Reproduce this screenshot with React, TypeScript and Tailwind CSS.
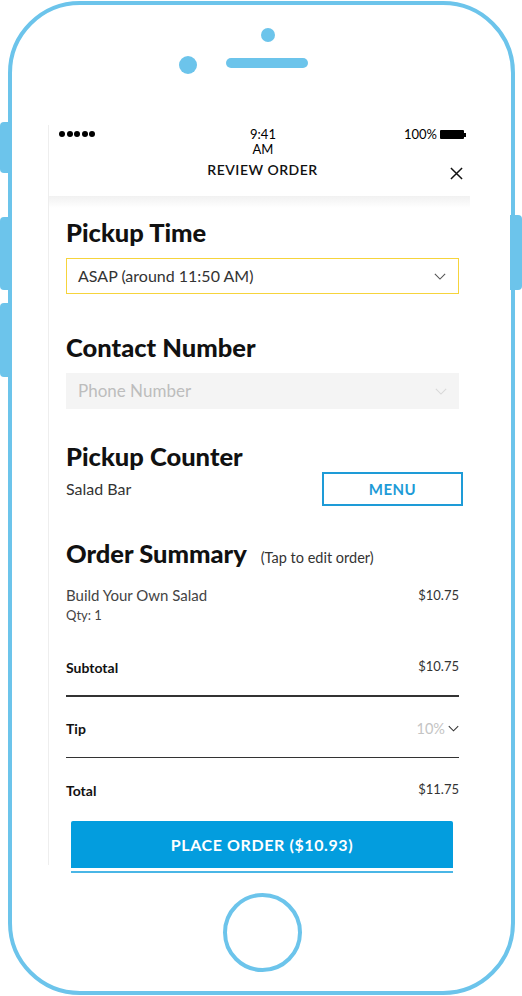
import React from 'react';

const FONT = { fontFamily: 'Lato, "Open Sans", sans-serif' };

function Chevron({ className }: { className?: string }) {
  return (
    <svg viewBox="0 0 14 8" className={className} fill="none" stroke="currentColor" strokeWidth="1.3">
      <path d="M1 1l6 6 6-6" />
    </svg>
  );
}

function StatusBar() {
  return (
    <div className="flex shrink-0 h-[33px] text-[13px] leading-[15px] text-black">
      <div className="w-[170px] pl-[10px] pt-[6px] flex gap-[1.5px]">
        {[0, 1, 2, 3, 4].map((i) => (
          <div key={i} className="w-[6px] h-[6px] rounded-full bg-black" />
        ))}
      </div>
      <div className="w-[88px] text-center pt-[2px]">
        9:41
        <br />
        AM
      </div>
      <div className="ml-[97px] flex items-start pt-[2px] gap-[3px]">
        <span>100%</span>
        <div className="mt-[3px] flex items-center">
          <div className="w-[24px] h-[9px] bg-black rounded-[1px]" />
          <div className="w-[2px] h-[4px] bg-black" />
        </div>
      </div>
    </div>
  );
}

function SummaryRow({ label, value, muted }: { label: string; value: React.ReactNode; muted?: boolean }) {
  return (
    <div className="flex justify-between items-center h-[20px]">
      <span className="font-bold text-[14px] text-[#111]">{label}</span>
      <span className={muted ? 'text-[14.5px] text-[#c4c4c4]' : 'text-[13px] text-[#333]'}>{value}</span>
    </div>
  );
}

export default function App() {
  return (
    <div className="relative w-[522px] h-[996px] bg-white overflow-hidden" style={FONT}>
      {/* side buttons */}
      <div className="absolute left-0 top-[122px] w-[10px] h-[51px] bg-[#6cc4eb] rounded-l-[4px]" />
      <div className="absolute left-0 top-[217px] w-[10px] h-[73px] bg-[#6cc4eb] rounded-l-[4px]" />
      <div className="absolute left-0 top-[303px] w-[10px] h-[74px] bg-[#6cc4eb] rounded-l-[4px]" />
      <div className="absolute right-0 top-[215px] w-[12px] h-[75px] bg-[#6cc4eb] rounded-r-[4px]" />

      {/* phone frame */}
      <div className="ml-[8px] mt-[1px] w-[507px] h-[994px] border-4 border-[#6cc4eb] rounded-[72px] flex flex-col">
        <div className="ml-[249px] mt-[23px] w-[14px] h-[14px] rounded-full bg-[#6cc4eb]" />
        <div className="ml-[167px] mt-[14px] flex items-start">
          <div className="w-[18px] h-[18px] rounded-full bg-[#6cc4eb]" />
          <div className="ml-[29px] mt-[2px] w-[82px] h-[10px] rounded-full bg-[#6cc4eb]" />
        </div>

        {/* screen */}
        <div className="ml-[36px] mt-[51px] w-[422px] h-[740px] shrink-0 border-l border-[#eeeeee] flex flex-col">
          <StatusBar />
          <div className="relative shrink-0 h-[38px]">
            <div className="text-center text-[14px] font-semibold tracking-[0.5px] text-[#111] leading-[20px] pl-[6px] pt-[2px]">
              REVIEW ORDER
            </div>
            <svg viewBox="0 0 14 14" className="absolute left-[401px] top-[9px] w-[13px] h-[13px]" fill="none" stroke="#111" strokeWidth="1.6">
              <path d="M1 1l12 12M13 1L1 13" />
            </svg>
          </div>
          <div className="shrink-0 h-[12px] bg-gradient-to-b from-[#f1f1f1] to-white" />

          <div className="shrink-0 pl-[17px] w-[410px] flex flex-col">
            <h2 className="mt-[9px] h-[30px] leading-[30px] text-[25.5px] font-black text-[#111]">Pickup Time</h2>
            <div className="mt-[11px] h-[36px] border-[1.5px] border-[#f6d43c] flex items-center justify-between pl-[11px] pr-[12px]">
              <span className="text-[16px] text-[#333]">ASAP (around 11:50 AM)</span>
              <Chevron className="w-[12px] h-[7px] text-[#555]" />
            </div>

            <h2 className="mt-[38px] h-[30px] leading-[30px] text-[25.5px] font-black text-[#111]">Contact Number</h2>
            <div className="mt-[11px] h-[36px] bg-[#f4f4f4] flex items-center justify-between pl-[12px] pr-[12px]">
              <span className="text-[17px] text-[#bdbdbd]">Phone Number</span>
              <Chevron className="w-[12px] h-[7px] text-[#d8d8d8]" />
            </div>

            <h2 className="mt-[32px] h-[30px] leading-[30px] text-[25.5px] font-black text-[#111]">Pickup Counter</h2>
            <div className="mt-[1px] flex items-center justify-between mr-[-4px]">
              <span className="text-[16px] text-[#333]">Salad Bar</span>
              <button className="w-[141px] h-[34px] border-2 border-[#1e9bd7] text-[#1e9bd7] font-bold text-[15px] tracking-[0.5px]">
                MENU
              </button>
            </div>

            <div className="mt-[32px] h-[30px] flex items-baseline gap-[14px]">
              <h2 className="leading-[30px] text-[25.5px] font-black text-[#111]">Order Summary</h2>
              <span className="text-[14.5px] text-[#333]">(Tap to edit order)</span>
            </div>

            <div className="mt-[17px] flex justify-between text-[#444]">
              <div className="leading-[20px]">
                <div className="text-[15px]">Build Your Own Salad</div>
                <div className="text-[13px]">Qty: 1</div>
              </div>
              <span className="text-[13px] leading-[20px] text-[#333]">$10.75</span>
            </div>

            <div className="mt-[32px]">
              <SummaryRow label="Subtotal" value="$10.75" />
            </div>
            <div className="mt-[18px] h-[1.5px] bg-[#333]" />
            <div className="mt-[22px]">
              <SummaryRow
                label="Tip"
                muted
                value={
                  <span className="flex items-center gap-[3px]">
                    10%
                    <Chevron className="w-[11px] h-[7px] text-[#333]" />
                  </span>
                }
              />
            </div>
            <div className="mt-[18px] h-[1.5px] bg-[#333]" />
            <div className="mt-[22px]">
              <SummaryRow label="Total" value="$11.75" />
            </div>

            <button className="mt-[21px] ml-[5px] w-[382px] h-[47px] bg-[#039dde] rounded-t-[2px] text-white font-bold text-[16px] tracking-[0.6px]">
              PLACE ORDER ($10.93)
            </button>
            <div className="mt-[3px] ml-[5px] w-[382px] h-[2px] bg-[#4ab6e6]" />
          </div>
        </div>

        {/* home button */}
        <div className="self-center shrink-0 mt-[28px] ml-[1px] w-[79px] h-[79px] rounded-full border-4 border-[#6cc4eb]" />
      </div>
    </div>
  );
}
